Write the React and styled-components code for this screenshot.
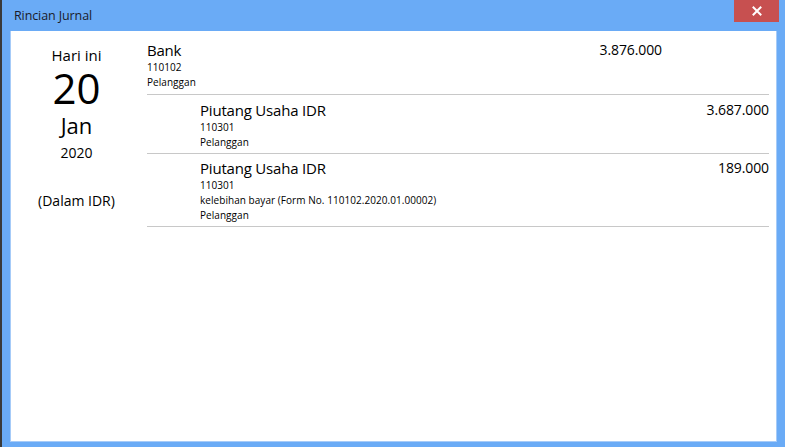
import React from "react";
import styled, { createGlobalStyle } from "styled-components";

const Global = createGlobalStyle`
  html, body { margin: 0; padding: 0; width: 785px; height: 447px; overflow: hidden; }
  body { font-family: "Open Sans", "Noto Sans", sans-serif; color: #000; }
`;

const Desktop = styled.div`
  display: flex;
  width: 785px;
  height: 447px;
  background: #3a3a3a;
  padding-left: 2px;
  box-sizing: border-box;
`;

const Window = styled.div`
  flex: 1;
  display: flex;
  flex-direction: column;
  background: #6aabf6;
  padding: 0 8px 5px 8px;
  box-sizing: border-box;
`;

const TitleBar = styled.div`
  height: 31px;
  display: flex;
  align-items: flex-start;
  justify-content: space-between;
`;

const Title = styled.span`
  font-family: "Open Sans", sans-serif;
  font-size: 12.5px;
  line-height: 31px;
  padding-left: 4px;
  color: #1b1b2a;
  letter-spacing: -0.1px;
`;

const CloseButton = styled.div`
  width: 45px;
  height: 22px;
  margin-right: -2px;
  background: #c75050;
  display: flex;
  align-items: center;
  justify-content: center;
`;

const Client = styled.div`
  flex: 1;
  background: #fff;
  border: 1px solid #a6cbf8;
  border-top: none;
  display: flex;
  box-sizing: border-box;
`;

const DateColumn = styled.div`
  width: 131px;
  display: flex;
  flex-direction: column;
  align-items: center;
  padding-top: 15px;
`;

const DateText = styled.div`
  font-size: ${(p) => p.size}px;
  line-height: ${(p) => p.lh}px;
  margin-top: ${(p) => p.mt || 0}px;
  color: #000;
`;

const Entries = styled.div`
  flex: 1;
  padding: 4px 7px 0 5px;
  display: flex;
  flex-direction: column;
`;

const Row = styled.div`
  display: flex;
  align-items: flex-start;
  padding: 4px 0 3px ${(p) => (p.credit ? 53 : 0)}px;
  border-bottom: 1px solid #c8c8c8;
  &:first-child { padding-top: 5px; padding-bottom: 4px; }
  &:nth-child(2) { padding-top: 5px; }
`;

const Info = styled.div`
  flex: 1;
  display: flex;
  flex-direction: column;
`;

const AccountName = styled.div`
  font-size: 15px;
  line-height: 20px;
  letter-spacing: -0.2px;
`;

const Small = styled.div`
  font-size: 10px;
  line-height: 15px;
  color: #000;
  letter-spacing: 0.05px;
`;

const Amount = styled.div`
  font-size: 14px;
  line-height: 20px;
  padding-right: ${(p) => (p.credit ? 0 : 107)}px;
  letter-spacing: -0.1px;
`;

const entries = [
  { name: "Bank", code: "110102", lines: ["Pelanggan"], amount: "3.876.000", credit: false },
  { name: "Piutang Usaha IDR", code: "110301", lines: ["Pelanggan"], amount: "3.687.000", credit: true },
  {
    name: "Piutang Usaha IDR",
    code: "110301",
    lines: ["kelebihan bayar (Form No. 110102.2020.01.00002)", "Pelanggan"],
    amount: "189.000",
    credit: true,
  },
];

export default function App() {
  return (
    <>
      <Global />
      <Desktop>
        <Window>
          <TitleBar>
            <Title>Rincian Jurnal</Title>
            <CloseButton>
              <svg width="10" height="10" viewBox="0 0 10 10">
                <path d="M1.5 1.5 L8.5 8.5 M8.5 1.5 L1.5 8.5" stroke="#fff" strokeWidth="2" strokeLinecap="square" />
              </svg>
            </CloseButton>
          </TitleBar>
          <Client>
            <DateColumn>
              <DateText size={15} lh={18}>Hari ini</DateText>
              <DateText size={42} lh={48}>20</DateText>
              <DateText size={22} lh={26}>Jan</DateText>
              <DateText size={14} lh={20} mt={5}>2020</DateText>
              <DateText size={14} lh={20} mt={28}>(Dalam IDR)</DateText>
            </DateColumn>
            <Entries>
              {entries.map((e, i) => (
                <Row key={i} credit={e.credit}>
                  <Info>
                    <AccountName>{e.name}</AccountName>
                    <Small>{e.code}</Small>
                    {e.lines.map((l, j) => (
                      <Small key={j}>{l}</Small>
                    ))}
                  </Info>
                  <Amount credit={e.credit}>{e.amount}</Amount>
                </Row>
              ))}
            </Entries>
          </Client>
        </Window>
      </Desktop>
    </>
  );
}
